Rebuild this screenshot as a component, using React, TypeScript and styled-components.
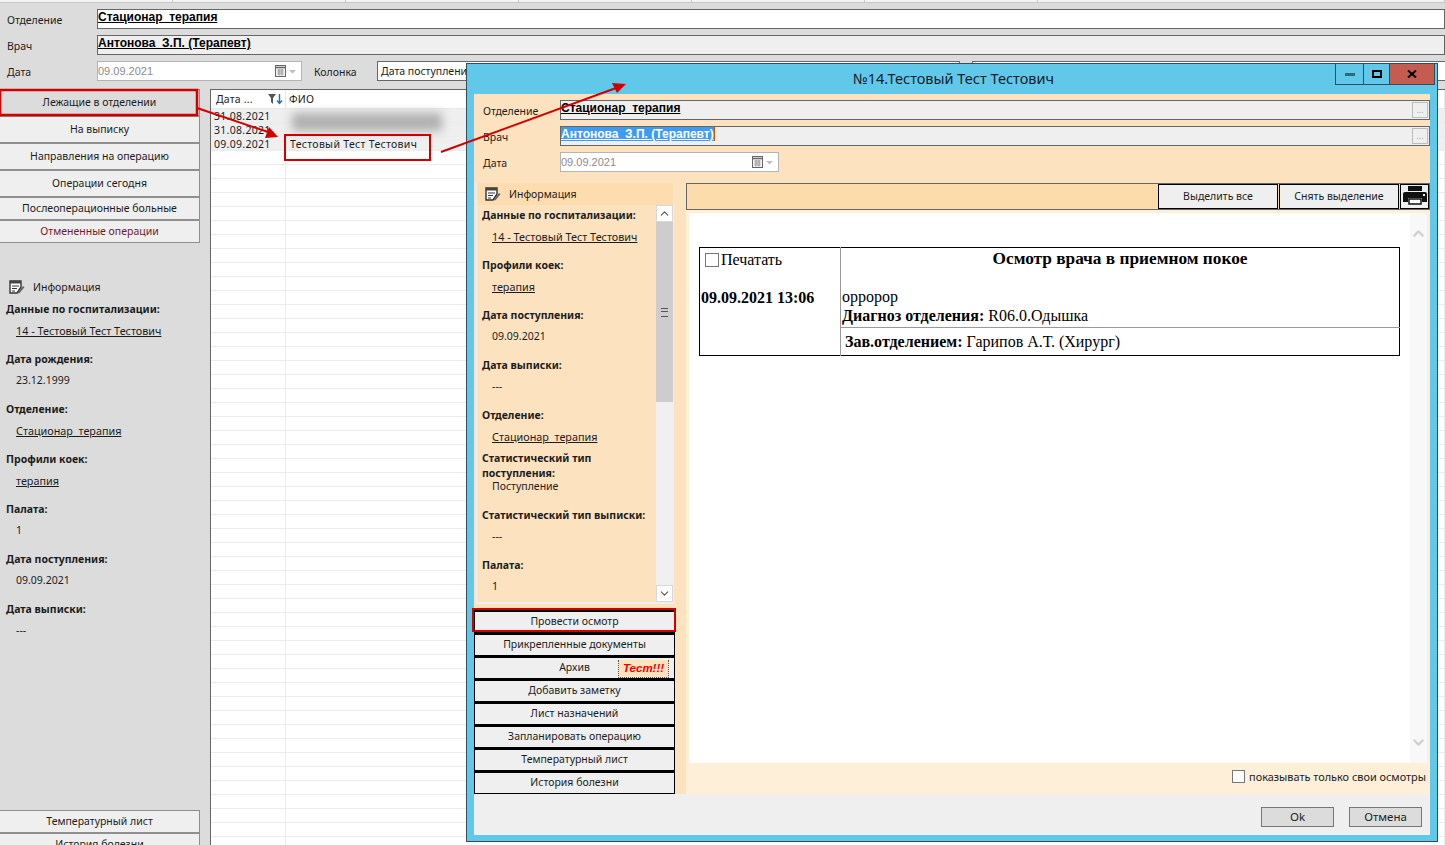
import styled, { createGlobalStyle } from "styled-components";
import { ChevronDown, ChevronUp } from "lucide-react";

const UI_FONT = `"Noto Sans", "Open Sans", Arial, sans-serif`;

const GlobalStyle = createGlobalStyle`
  html, body {
    margin: 0;
    padding: 0;
    overflow: hidden;
  }
  * {
    box-sizing: border-box;
  }
  body {
    font-family: ${UI_FONT};
    font-size: 10.5px;
    color: #1c1c1c;
  }
`;

const Page = styled.div`
  position: relative;
  width: 1445px;
  height: 845px;
  overflow: hidden;
  background: #dcdcdc;
`;

const TopStrip = styled.div`
  display: grid;
  grid-template-columns: repeat(6, 173px) 1fr;
  height: 3px;
  background: #f4f4f4;
  border-bottom: 1px solid #c8c8c8;
  div {
    border-right: 1px solid #c8c8c8;
  }
`;

const Header = styled.div`
  display: flex;
  flex-direction: column;
  gap: 6px;
  height: 86px;
  padding-top: 6px;
`;

const FormRow = styled.div`
  display: flex;
  align-items: flex-start;
`;

const FormLabel = styled.label<{ $width: number; $inset: number }>`
  width: ${(p) => p.$width}px;
  padding-left: ${(p) => p.$inset}px;
  padding-top: 4px;
  flex-shrink: 0;
  line-height: 15px;
`;

const LookupField = styled.div<{ $bg: string }>`
  position: relative;
  flex: 1;
  height: 20px;
  background: ${(p) => p.$bg};
  border: 1px solid #666;
`;

const LookupText = styled.span<{ $selected?: boolean }>`
  display: inline-block;
  font-family: "Liberation Sans", Arial, sans-serif;
  font-size: 12px;
  font-weight: 700;
  line-height: 14px;
  white-space: pre;
  text-decoration: underline;
  color: ${(p) => (p.$selected ? "#fff" : "#000")};
  background: ${(p) => (p.$selected ? "#3d9bf5" : "transparent")};
  border-right: ${(p) => (p.$selected ? "1px solid #c05a00" : "none")};
`;

const DotsButton = styled.span`
  position: absolute;
  top: 1px;
  right: 1px;
  width: 16px;
  height: 16px;
  border: 1px solid #bcbcbc;
  color: #aaa;
  font-size: 9px;
  line-height: 14px;
  text-align: center;
`;

const DateField = styled.div<{ $width: number }>`
  display: flex;
  align-items: center;
  justify-content: space-between;
  width: ${(p) => p.$width}px;
  height: 20px;
  background: #fff;
  border: 1px solid #b4b4b4;
  padding: 0 5px 0 0;
  color: #8b8b8b;
  font-family: "Liberation Sans", Arial, sans-serif;
  font-size: 11px;
  flex-shrink: 0;
`;

const ComboField = styled.div<{ $width: number }>`
  width: ${(p) => p.$width}px;
  height: 20px;
  margin-left: 12px;
  background: #fff;
  border: 1px solid #666;
  padding: 2px 3px;
  line-height: 14px;
  flex-shrink: 0;
  white-space: nowrap;
  overflow: hidden;
`;

const Workspace = styled.div`
  display: flex;
  height: 756px;
`;

const Sidebar = styled.aside`
  display: flex;
  flex-direction: column;
  width: 200px;
  flex-shrink: 0;
`;

const SideButton = styled.button<{ $height: number; $wine?: boolean }>`
  height: ${(p) => p.$height}px;
  flex-shrink: 0;
  background: #efefef;
  border: 1px solid #8f8f8f;
  border-left: none;
  font: inherit;
  color: ${(p) => (p.$wine ? "#6d1c2c" : "#1c1c1c")};
  padding: 0 0 2px;
  &:first-child {
    background: #dcdcdc;
  }
`;

const SideInfo = styled.div`
  height: 567px;
  flex-shrink: 0;
  padding: 36px 6px 0;
`;

const InfoHeading = styled.div`
  display: flex;
  align-items: center;
  gap: 8px;
  height: 16px;
  padding-left: 3px;
  margin-bottom: 6px;
`;

const InfoItem = styled.div<{ $height?: number }>`
  height: ${(p) => p.$height ?? 50}px;
`;

const InfoLabel = styled.div`
  font-weight: 700;
  line-height: 15px;
  padding-top: 1px;
`;

const InfoValue = styled.div<{ $tight?: boolean }>`
  margin-top: ${(p) => (p.$tight ? -2 : 6)}px;
  padding-left: 10px;
  line-height: 15px;
`;

const InfoLink = styled.span`
  font-size: 10.8px;
  white-space: pre;
  text-decoration: underline;
  vertical-align: 1px;
`;

const Grid = styled.div`
  flex: 1;
  margin-left: 10px;
  background: #fff;
  border-left: 1px solid #666;
  border-top: 1px solid #666;
  overflow: hidden;
`;

const GridHead = styled.div`
  display: grid;
  grid-template-columns: 75px 1fr;
  height: 19px;
  border-bottom: 1px solid #e8e8e8;
`;

const HeadCell = styled.div`
  display: flex;
  align-items: center;
  justify-content: space-between;
  padding: 0 2px 0 5px;
  border-right: 1px solid #e8e8e8;
  line-height: 16px;
  letter-spacing: 0.2px;
  & + & {
    padding-left: 3px;
  }
`;

const GridRow = styled.div`
  display: grid;
  grid-template-columns: 75px 1fr;
  height: 14px;
  border-bottom: 1px solid #ececec;
  line-height: 13px;
`;

const GridCell = styled.div<{ $active?: boolean }>`
  padding: 1px 0 0 3px;
  border-right: 1px solid #ececec;
  background: ${(p) => (p.$active ? "#efefef" : "transparent")};
  letter-spacing: 0.3px;
  white-space: nowrap;
  overflow: hidden;
  & + & {
    padding-left: 4px;
  }
`;

const Blurred = styled.div`
  position: absolute;
  left: 292px;
  top: 113px;
  width: 150px;
  height: 18px;
  background: #b0b0b0;
  filter: blur(5px);
`;

const Modal = styled.section`
  position: absolute;
  left: 466px;
  top: 63px;
  width: 972px;
  height: 779px;
  display: flex;
  flex-direction: column;
  background: #62c8ea;
  border: 1px solid #2f4f5c;
  padding: 0 7px 6px;
`;

const TitleBar = styled.header`
  position: relative;
  height: 30px;
  flex-shrink: 0;
  padding-left: 3px;
  text-align: center;
  font-size: 14.5px;
  line-height: 29px;
  color: #10232b;
`;

const WindowButtons = styled.div`
  position: absolute;
  top: 0;
  right: -5px;
  display: flex;
  height: 21px;
`;

const WindowButton = styled.div<{ $width: number; $bg?: string }>`
  display: flex;
  align-items: center;
  justify-content: center;
  width: ${(p) => p.$width}px;
  background: ${(p) => p.$bg ?? "transparent"};
  border: 1px solid #2f4f5c;
  border-top: none;
  margin-left: -1px;
`;

const ModalBody = styled.div`
  flex: 1;
  display: flex;
  flex-direction: column;
  background: #efefef;
  min-height: 0;
`;

const ModalForm = styled.div`
  display: flex;
  flex-direction: column;
  gap: 6px;
  height: 86px;
  padding: 6px 0 0;
  background: #fde2c0;
`;

const ModalLower = styled.div`
  display: flex;
  height: 614px;
  flex-shrink: 0;
  background: #fde2c0;
`;

const LeftColumn = styled.div`
  display: flex;
  flex-direction: column;
  width: 212px;
  flex-shrink: 0;
  padding-top: 3px;
`;

const InfoPanel = styled.div`
  display: flex;
  flex-direction: column;
  width: 198px;
  height: 421px;
  margin-left: 2px;
  border: 1px solid #efefef;
  border-top: none;
  border-bottom-width: 2px;
`;

const PanelHead = styled.div`
  display: flex;
  align-items: center;
  gap: 8px;
  height: 22px;
  padding-left: 8px;
  background: #fddcb0;
  flex-shrink: 0;
`;

const PanelMain = styled.div`
  display: flex;
  flex: 1;
  min-height: 0;
`;

const PanelContent = styled.div`
  flex: 1;
  padding: 2px 0 0 5px;
  overflow: hidden;
`;

const ScrollBar = styled.div`
  display: flex;
  flex-direction: column;
  width: 17px;
  background: #f0f0f0;
  flex-shrink: 0;
`;

const ScrollArrow = styled.div`
  display: flex;
  align-items: center;
  justify-content: center;
  height: 17px;
  background: #fff;
  border: 1px solid #d8d8d8;
  color: #555;
  flex-shrink: 0;
`;

const ScrollThumb = styled.div`
  display: flex;
  align-items: center;
  justify-content: center;
  height: 180px;
  background: #cdcdcd;
  flex-shrink: 0;
  &::after {
    content: "";
    width: 7px;
    height: 7px;
    border-top: 1px solid #555;
    border-bottom: 1px solid #555;
    background: linear-gradient(#cdcdcd 2px, #555 2px, #555 3px, #cdcdcd 3px);
  }
`;

const ScrollSpacer = styled.div`
  flex: 1;
`;

const ActionList = styled.div`
  display: flex;
  flex-direction: column;
  width: 201px;
  margin-top: 6px;
`;

const ActionButton = styled.button`
  position: relative;
  height: 23px;
  background: #efefef;
  border: 1px solid #000;
  border-top-width: 2px;
  font: inherit;
  padding: 0 0 3px;
  color: #1c1c1c;
`;

const NoteBadge = styled.span`
  position: absolute;
  right: 5px;
  top: 2px;
  width: 51px;
  height: 18px;
  background: #fde2c0;
  border: 1px dotted #555;
  border-top: none;
  color: #f00000;
  font-family: "Liberation Sans", Arial, sans-serif;
  font-size: 11.5px;
  font-weight: 700;
  font-style: italic;
  line-height: 17px;
  text-align: center;
`;

const RightColumn = styled.div`
  display: flex;
  flex-direction: column;
  flex: 1;
  min-width: 0;
  padding-top: 3px;
`;

const ToolBar = styled.div`
  display: flex;
  justify-content: flex-end;
  gap: 1px;
  height: 27px;
  flex-shrink: 0;
  background: #fddcab;
  border: 1px solid #666;
`;

const ToolButton = styled.button<{ $width: number }>`
  display: flex;
  align-items: center;
  justify-content: center;
  width: ${(p) => p.$width}px;
  background: #efefef;
  border: 1px solid #000;
  font: inherit;
  padding: 0 0 2px;
  color: #1c1c1c;
`;

const DocWrap = styled.div`
  flex: 1;
  display: flex;
  flex-direction: column;
  padding: 3px 3px 0;
  background: #feefd9;
  min-height: 0;
`;

const DocArea = styled.div`
  display: flex;
  height: 550px;
  background: #fff;
  flex-shrink: 0;
`;

const DocScroll = styled.div`
  flex: 1;
  padding: 34px 10px 0;
`;

const DocScrollBar = styled.div`
  display: flex;
  flex-direction: column;
  justify-content: space-between;
  align-items: center;
  width: 17px;
  padding: 12px 0;
  background: #f8f8f8;
  color: #d0d0d0;
  flex-shrink: 0;
`;

const ExamTable = styled.table`
  width: 701px;
  height: 108px;
  border-collapse: collapse;
  border: 1px solid #000;
  font-family: "Liberation Serif", "Times New Roman", serif;
  font-size: 16px;
  color: #000;
  td {
    padding: 0;
    vertical-align: top;
  }
`;

const DateCell = styled.td`
  width: 141px;
  border-right: 1px solid #999;
  padding-left: 1px !important;
`;

const PrintLine = styled.label`
  display: flex;
  align-items: center;
  gap: 2px;
  margin: 3px 0 0 4px;
  line-height: 17px;
`;

const PrintBox = styled.input`
  appearance: none;
  width: 14px;
  height: 14px;
  margin: 0;
  border: 1px solid #767676;
  background: #fff;
`;

const ExamDate = styled.div`
  margin-top: 21px;
  font-weight: 700;
  font-size: 16px;
  line-height: 18px;
`;

const ExamTitle = styled.div`
  font-size: 17.3px;
  font-weight: 700;
  line-height: 18px;
  margin-top: 2px;
  text-align: center;
`;

const ExamText = styled.div`
  margin: 19px 0 2px 1px;
  line-height: 19px;
`;

const SignCell = styled.td`
  border-top: 1px solid #999;
  height: 28px;
  padding: 5px 0 0 4px !important;
  line-height: 18px;
`;

const DocFooter = styled.div`
  display: flex;
  align-items: center;
  justify-content: flex-end;
  gap: 4px;
  height: 28px;
  padding: 0 1px 1px 0;
  font-size: 10.9px;
`;

const OwnBox = styled.input`
  appearance: none;
  width: 13px;
  height: 13px;
  margin: 0;
  border: 1px solid #767676;
  background: #fff;
`;

const DialogFooter = styled.div`
  display: flex;
  justify-content: flex-end;
  gap: 15px;
  padding: 13px 8px 0 0;
`;

const DialogButton = styled.button`
  width: 73px;
  height: 20px;
  background: #dcdcdc;
  border: 1px solid #777;
  font: inherit;
  font-size: 11.5px;
  line-height: 16px;
  padding: 0;
  color: #1c1c1c;
`;

const Annotations = styled.svg`
  position: absolute;
  inset: 0;
  pointer-events: none;
`;

function NoteIcon() {
  return (
    <svg width="16" height="14" viewBox="0 0 16 14" fill="none">
      <path d="M1 1h11v6l-4 6H1z" fill="#fff" stroke="#333" strokeWidth="1.4" />
      <path d="M1 1h11v2.5H1z" fill="#444" />
      <path d="M3 6h7M3 8.5h5M3 11h3" stroke="#333" />
      <path d="M9 12l5-6 1.5 1.2-5 6H9z" fill="#666" />
    </svg>
  );
}

function CalendarIcon() {
  return (
    <svg width="21" height="12" viewBox="0 0 21 12" fill="none">
      <rect x="0.5" y="0.5" width="10" height="11" fill="#f4f4f4" stroke="#666" />
      <path d="M0 2.5h11" stroke="#666" strokeWidth="1.5" />
      <path d="M2.5 5h6M2.5 7h6M2.5 9h6M4 4v6.5M7 4v6.5" stroke="#999" />
      <path d="M14 5h7l-3.5 3.5z" fill="#bdbdbd" />
    </svg>
  );
}

function SortIcon() {
  return (
    <svg width="15" height="12" viewBox="0 0 15 12">
      <path d="M0 1h8L5 5v6L3 9V5z" fill="#555" />
      <path d="M11.5 1v9M9 7.5l2.5 3 2.5-3" fill="none" stroke="#1f6fb5" strokeWidth="1.4" />
    </svg>
  );
}

function PrinterIcon() {
  return (
    <svg width="24" height="19" viewBox="0 0 24 19">
      <rect x="5" y="0" width="14" height="5" fill="#111" />
      <path d="M2 6h20a2 2 0 0 1 2 2v8h-5v-4H5v4H0V8a2 2 0 0 1 2-2z" fill="#111" />
      <rect x="20" y="8" width="2" height="2" fill="#efefef" />
      <rect x="6" y="13" width="12" height="5" fill="#fff" stroke="#111" strokeWidth="1.5" />
    </svg>
  );
}

function Lookup({
  label,
  value,
  bg,
  selected,
  dots,
  inset,
  labelWidth,
}: {
  label: string;
  value: string;
  bg: string;
  selected?: boolean;
  dots?: boolean;
  inset: number;
  labelWidth: number;
}) {
  return (
    <FormRow>
      <FormLabel $width={labelWidth} $inset={inset}>
        {label}
      </FormLabel>
      <LookupField $bg={bg}>
        <LookupText $selected={selected}>{value}</LookupText>
        {dots && <DotsButton>...</DotsButton>}
      </LookupField>
    </FormRow>
  );
}

const sideButtons: [string, number, boolean?][] = [
  ["Лежащие в отделении", 27],
  ["На выписку", 27],
  ["Направления на операцию", 27],
  ["Операции сегодня", 27],
  ["Послеоперационные больные", 23],
  ["Отмененные операции", 23, true],
];

const sideInfo = [
  ["Данные по госпитализации:", "14 - Тестовый Тест Тестович", true],
  ["Дата рождения:", "23.12.1999", false],
  ["Отделение:", "Стационар  терапия", true],
  ["Профили коек:", "терапия", true],
  ["Палата:", "1", false],
  ["Дата поступления:", "09.09.2021", false],
  ["Дата выписки:", "---", false],
] as const;

const gridRows = [
  ["31.08.2021", ""],
  ["31.08.2021", ""],
  ["09.09.2021", "Тестовый Тест Тестович"],
];

const actions = [
  "Провести осмотр",
  "Прикрепленные документы",
  "Архив",
  "Добавить заметку",
  "Лист назначений",
  "Запланировать операцию",
  "Температурный лист",
  "История болезни",
];

export default function App() {
  return (
    <Page>
      <GlobalStyle />
      <TopStrip>
        {Array.from({ length: 7 }, (_, i) => (
          <div key={i} />
        ))}
      </TopStrip>
      <Header>
        <Lookup label="Отделение" value="Стационар  терапия" bg="#fff" inset={7} labelWidth={97} />
        <Lookup label="Врач" value="Антонова  З.П. (Терапевт)" bg="#efefef" inset={7} labelWidth={97} />
        <FormRow>
          <FormLabel $width={97} $inset={7}>
            Дата
          </FormLabel>
          <DateField $width={205}>
            09.09.2021
            <CalendarIcon />
          </DateField>
          <FormLabel $width={63} $inset={12}>
            Колонка
          </FormLabel>
          <ComboField $width={583}>Дата поступления</ComboField>
          <ComboField $width={483} />
        </FormRow>
      </Header>
      <Workspace>
        <Sidebar>
          {sideButtons.map(([text, height, wine]) => (
            <SideButton key={text} $height={height} $wine={wine}>
              {text}
            </SideButton>
          ))}
          <SideInfo>
            <InfoHeading>
              <NoteIcon />
              Информация
            </InfoHeading>
            {sideInfo.map(([label, value, link]) => (
              <InfoItem key={label}>
                <InfoLabel>{label}</InfoLabel>
                <InfoValue>{link ? <InfoLink>{value}</InfoLink> : value}</InfoValue>
              </InfoItem>
            ))}
          </SideInfo>
          <SideButton $height={23}>Температурный лист</SideButton>
          <SideButton $height={23}>История болезни</SideButton>
        </Sidebar>
        <Grid>
          <GridHead>
            <HeadCell>
              Дата ...
              <SortIcon />
            </HeadCell>
            <HeadCell>ФИО</HeadCell>
          </GridHead>
          {gridRows.map(([date, name], i) => (
            <GridRow key={i}>
              <GridCell $active>{date}</GridCell>
              <GridCell $active>{name}</GridCell>
            </GridRow>
          ))}
          {Array.from({ length: 50 }, (_, i) => (
            <GridRow key={i}>
              <GridCell />
              <GridCell />
            </GridRow>
          ))}
        </Grid>
      </Workspace>
      <Blurred />

      <Modal>
        <TitleBar>
          №14.Тестовый Тест Тестович
          <WindowButtons>
            <WindowButton $width={29}>
              <svg width="10" height="3">
                <rect width="10" height="3" fill="#2d6a80" />
              </svg>
            </WindowButton>
            <WindowButton $width={27}>
              <svg width="10" height="8">
                <rect x="1" y="1" width="8" height="6" fill="none" stroke="#000" strokeWidth="2" />
              </svg>
            </WindowButton>
            <WindowButton $width={46} $bg="#c55c52">
              <svg width="10" height="8">
                <path d="M1 0.5l8 7M9 0.5l-8 7" stroke="#000" strokeWidth="2" />
              </svg>
            </WindowButton>
          </WindowButtons>
        </TitleBar>
        <ModalBody>
          <ModalForm>
            <Lookup label="Отделение" value="Стационар  терапия" bg="#efefef" dots inset={9} labelWidth={86} />
            <Lookup label="Врач" value="Антонова  З.П. (Терапевт)" bg="#efefef" selected dots inset={9} labelWidth={86} />
            <FormRow>
              <FormLabel $width={86} $inset={9}>
                Дата
              </FormLabel>
              <DateField $width={219}>
                09.09.2021
                <CalendarIcon />
              </DateField>
            </FormRow>
          </ModalForm>
          <ModalLower>
            <LeftColumn>
              <InfoPanel>
                <PanelHead>
                  <NoteIcon />
                  Информация
                </PanelHead>
                <PanelMain>
                  <PanelContent>
                    <InfoItem>
                      <InfoLabel>Данные по госпитализации:</InfoLabel>
                      <InfoValue>
                        <InfoLink>14 - Тестовый Тест Тестович</InfoLink>
                      </InfoValue>
                    </InfoItem>
                    <InfoItem>
                      <InfoLabel>Профили коек:</InfoLabel>
                      <InfoValue>
                        <InfoLink>терапия</InfoLink>
                      </InfoValue>
                    </InfoItem>
                    <InfoItem>
                      <InfoLabel>Дата поступления:</InfoLabel>
                      <InfoValue>09.09.2021</InfoValue>
                    </InfoItem>
                    <InfoItem>
                      <InfoLabel>Дата выписки:</InfoLabel>
                      <InfoValue>---</InfoValue>
                    </InfoItem>
                    <InfoItem $height={43}>
                      <InfoLabel>Отделение:</InfoLabel>
                      <InfoValue>
                        <InfoLink>Стационар  терапия</InfoLink>
                      </InfoValue>
                    </InfoItem>
                    <InfoItem $height={57}>
                      <InfoLabel>
                        Статистический тип
                        <br />
                        поступления:
                      </InfoLabel>
                      <InfoValue $tight>Поступление</InfoValue>
                    </InfoItem>
                    <InfoItem>
                      <InfoLabel>Статистический тип выписки:</InfoLabel>
                      <InfoValue>---</InfoValue>
                    </InfoItem>
                    <InfoItem>
                      <InfoLabel>Палата:</InfoLabel>
                      <InfoValue>1</InfoValue>
                    </InfoItem>
                  </PanelContent>
                  <ScrollBar>
                    <ScrollArrow>
                      <ChevronUp size={13} />
                    </ScrollArrow>
                    <ScrollThumb />
                    <ScrollSpacer />
                    <ScrollArrow>
                      <ChevronDown size={13} />
                    </ScrollArrow>
                  </ScrollBar>
                </PanelMain>
              </InfoPanel>
              <ActionList>
                {actions.map((text) => (
                  <ActionButton key={text}>
                    {text}
                    {text === "Архив" && <NoteBadge>Тест!!!</NoteBadge>}
                  </ActionButton>
                ))}
              </ActionList>
            </LeftColumn>
            <RightColumn>
              <ToolBar>
                <ToolButton $width={120}>Выделить все</ToolButton>
                <ToolButton $width={120}>Снять выделение</ToolButton>
                <ToolButton $width={29}>
                  <PrinterIcon />
                </ToolButton>
              </ToolBar>
              <DocWrap>
                <DocArea>
                  <DocScroll>
                    <ExamTable>
                      <tbody>
                        <tr>
                          <DateCell rowSpan={2}>
                            <PrintLine>
                              <PrintBox type="checkbox" />
                              Печатать
                            </PrintLine>
                            <ExamDate>09.09.2021 13:06</ExamDate>
                          </DateCell>
                          <td>
                            <ExamTitle>Осмотр врача в приемном покое</ExamTitle>
                            <ExamText>
                              орророр
                              <br />
                              <b>Диагноз отделения:</b> R06.0.Одышка
                            </ExamText>
                          </td>
                        </tr>
                        <tr>
                          <SignCell>
                            <b>Зав.отделением:</b> Гарипов А.Т. (Хирург)
                          </SignCell>
                        </tr>
                      </tbody>
                    </ExamTable>
                  </DocScroll>
                  <DocScrollBar>
                    <ChevronUp size={17} strokeWidth={3} />
                    <ChevronDown size={17} strokeWidth={3} />
                  </DocScrollBar>
                </DocArea>
                <DocFooter>
                  <OwnBox type="checkbox" />
                  показывать только свои осмотры
                </DocFooter>
              </DocWrap>
            </RightColumn>
          </ModalLower>
          <DialogFooter>
            <DialogButton>Ok</DialogButton>
            <DialogButton>Отмена</DialogButton>
          </DialogFooter>
        </ModalBody>
      </Modal>

      <Annotations width="1445" height="845" viewBox="0 0 1445 845" fill="none">
        <rect x="0" y="90" width="197" height="25" stroke="#d00000" strokeWidth="2.5" />
        <rect x="285" y="135" width="145" height="25" stroke="#d00000" strokeWidth="2" />
        <rect x="473" y="609" width="202" height="22" stroke="#d00000" strokeWidth="2" />
        <path d="M197 108L268 132" stroke="#d00000" strokeWidth="2" />
        <path d="M278 137L265 138L269 127z" fill="#d00000" />
        <path d="M441 152L616 88" stroke="#d00000" strokeWidth="2" />
        <path d="M626 84L617 93L612 83z" fill="#d00000" />
      </Annotations>
    </Page>
  );
}
